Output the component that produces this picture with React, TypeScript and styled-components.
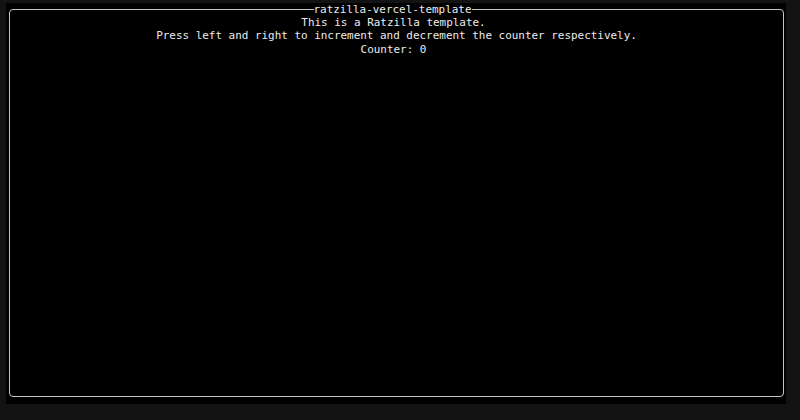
import React from "react";
import styled, { createGlobalStyle } from "styled-components";

const Global = createGlobalStyle`
  html, body {
    margin: 0;
    padding: 0;
    background: #131313;
    width: 800px;
    height: 420px;
    overflow: hidden;
  }
`;

const Page = styled.div`
  padding: 3px 14px 16px 6px;
  width: 800px;
  height: 420px;
  box-sizing: border-box;
`;

const Terminal = styled.div`
  width: 780px;
  height: 401px;
  background: #000;
  box-sizing: border-box;
  padding: 6px 2px 7px 3px;
  display: flex;
  font-family: "DejaVu Sans Mono", "Liberation Mono", monospace;
  font-size: 10.94px;
  color: #ececec;
`;

const Frame = styled.div`
  position: relative;
  flex: 1;
  border: 1px solid #c4c4c4;
  border-radius: 4px;
  box-sizing: border-box;
  display: flex;
  flex-direction: column;
  align-items: center;
  padding-top: 6px;
`;

const Title = styled.div`
  position: absolute;
  top: -7px;
  left: 50%;
  transform: translateX(-50%);
  margin-left: -4px;
  background: #000;
  line-height: 13.4px;
  height: 13.4px;
  white-space: pre;
`;

const Line = styled.div<{ $shift?: number }>`
  line-height: 13.37px;
  height: 13.37px;
  white-space: pre;
  margin-left: ${(p) => (p.$shift ? `${p.$shift * 2}px` : "0")};
`;

export default function App() {
  const counter = 0;
  return (
    <>
      <Global />
      <Page>
        <Terminal>
          <Frame>
            <Title>ratzilla-vercel-template</Title>
            <Line $shift={-3}>This is a Ratzilla template.</Line>
            <Line>Press left and right to increment and decrement the counter respectively.</Line>
            <Line $shift={-3}>Counter: {counter}</Line>
          </Frame>
        </Terminal>
      </Page>
    </>
  );
}
